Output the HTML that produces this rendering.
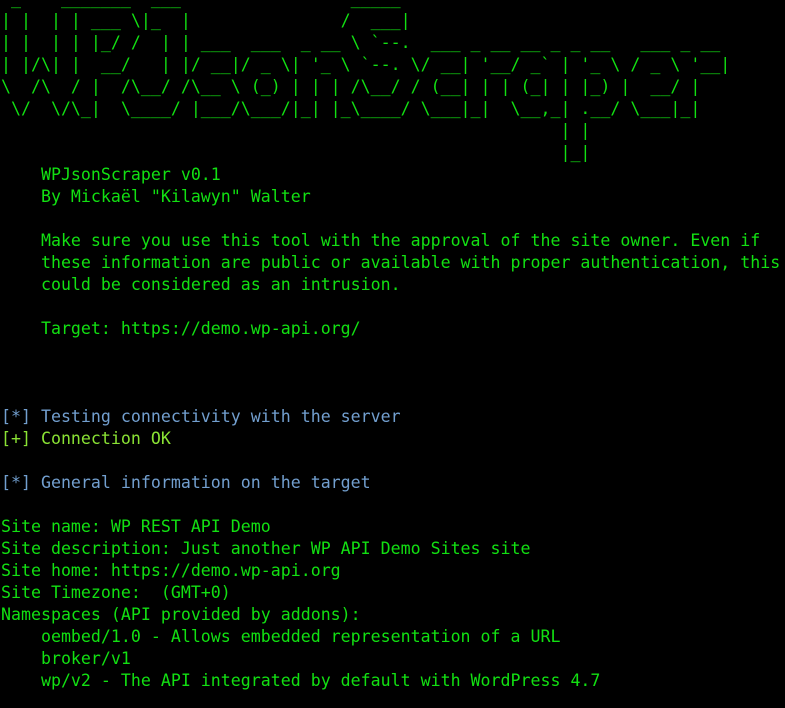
<!DOCTYPE html>
<html><head><meta charset="utf-8"><style>
html,body{margin:0;padding:0;background:#000;width:785px;height:708px;overflow:hidden}
pre{margin:0;position:absolute;left:1px;top:-12px;font-family:"DejaVu Sans Mono","Liberation Mono",monospace;font-size:16.6px;line-height:22px;color:#12e012;white-space:pre}
.b{color:#729fcf}.y{color:#8ae234}
</style></head><body><pre> _    _______  ___                 _____
| |  | | ___ \|_  |               /  ___|
| |  | | |_/ /  | | ___  ___  _ __ \ `--.  ___ _ __ __ _ _ __   ___ _ __
| |/\| |  __/   | |/ __|/ _ \| '_ \ `--. \/ __| '__/ _` | '_ \ / _ \ '__|
\  /\  / |  /\__/ /\__ \ (_) | | | /\__/ / (__| | | (_| | |_) |  __/ |
 \/  \/\_|  \____/ |___/\___/|_| |_\____/ \___|_|  \__,_| .__/ \___|_|
                                                        | |
                                                        |_|
    WPJsonScraper v0.1
    By Mickaël "Kilawyn" Walter

    Make sure you use this tool with the approval of the site owner. Even if
    these information are public or available with proper authentication, this
    could be considered as an intrusion.

    Target: https://demo.wp-api.org/



<span class="b">[*] Testing connectivity with the server</span>
<span class="y">[+] Connection OK</span>

<span class="b">[*] General information on the target</span>

Site name: WP REST API Demo
Site description: Just another WP API Demo Sites site
Site home: https://demo.wp-api.org
Site Timezone:  (GMT+0)
Namespaces (API provided by addons):
    oembed/1.0 - Allows embedded representation of a URL
    broker/v1
    wp/v2 - The API integrated by default with WordPress 4.7
</pre></body></html>
